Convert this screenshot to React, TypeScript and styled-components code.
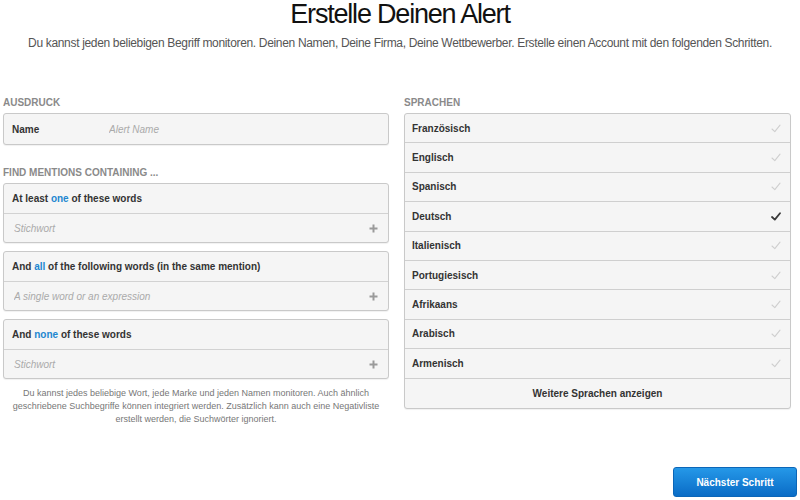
import React from 'react';
import styled, {createGlobalStyle} from "styled-components";

const GlobalStyle = createGlobalStyle`
  body {
    margin: 0;
    background: #fff;
    font-family: "Liberation Sans", Arial, sans-serif;
    color: #333;
  }
`

const languages = [
    {name: "Französisch", active: false},
    {name: "Englisch", active: false},
    {name: "Spanisch", active: false},
    {name: "Deutsch", active: true},
    {name: "Italienisch", active: false},
    {name: "Portugiesisch", active: false},
    {name: "Afrikaans", active: false},
    {name: "Arabisch", active: false},
    {name: "Armenisch", active: false},
]

const mentions = [
    {before: "At least ", word: "one", after: " of these words", placeholder: "Stichwort"},
    {before: "And ", word: "all", after: " of the following words (in the same mention)", placeholder: "A single word or an expression"},
    {before: "And ", word: "none", after: " of these words", placeholder: "Stichwort"},
]

const Check = ({active}: { active: boolean }) => (
    <svg width="10" height="9" viewBox="0 0 10 9">
        <path d="M1 5 L3.8 7.6 L9 1.2" fill="none" stroke={active ? "#3a3a3a" : "#cfcfcf"}
              strokeWidth={active ? 1.8 : 1.1} strokeLinecap="round" strokeLinejoin="round"/>
    </svg>
)

const Plus = () => (
    <svg width="9" height="9" viewBox="0 0 9 9">
        <path d="M4.5 0.5 V8.5 M0.5 4.5 H8.5" stroke="#9a9a9a" strokeWidth="2"/>
    </svg>
)

export default function App() {
    return (
        <Page>
            <GlobalStyle/>
            <Title>Erstelle Deinen Alert</Title>
            <Subtitle>Du kannst jeden beliebigen Begriff monitoren. Deinen Namen, Deine Firma, Deine Wettbewerber. Erstelle einen Account mit den folgenden Schritten.</Subtitle>
            <Columns>
                <Column>
                    <SectionLabel>Ausdruck</SectionLabel>
                    <Box>
                        <NameRow>
                            <FieldName>Name</FieldName>
                            <Input placeholder="Alert Name"/>
                        </NameRow>
                    </Box>
                    <SectionLabel spaced>Find mentions containing ...</SectionLabel>
                    <BoxStack>
                        {mentions.map((m, i) => (
                            <Box key={i}>
                                <BoxHeader>
                                    {m.before}<Highlight>{m.word}</Highlight>{m.after}
                                </BoxHeader>
                                <InputRow>
                                    <Input placeholder={m.placeholder}/>
                                    <Plus/>
                                </InputRow>
                            </Box>
                        ))}
                    </BoxStack>
                    <HelpText>
                        Du kannst jedes beliebige Wort, jede Marke und jeden Namen monitoren. Auch ähnlich<br/>
                        geschriebene Suchbegriffe können integriert werden. Zusätzlich kann auch eine Negativliste<br/>
                        erstellt werden, die Suchwörter ignoriert.
                    </HelpText>
                </Column>
                <Column>
                    <SectionLabel>Sprachen</SectionLabel>
                    <Box>
                        {languages.map(l => (
                            <LanguageRow key={l.name}>
                                <span>{l.name}</span>
                                <Check active={l.active}/>
                            </LanguageRow>
                        ))}
                        <MoreRow>Weitere Sprachen anzeigen</MoreRow>
                    </Box>
                </Column>
            </Columns>
            <Footer>
                <NextButton>Nächster Schritt</NextButton>
            </Footer>
        </Page>
    );
}

const Page = styled.div`
  width: 800px;
  height: 500px;
  overflow: hidden;
`
const Title = styled.h1`
  margin: 0;
  text-align: center;
  font-size: 27px;
  font-weight: 400;
  line-height: 28px;
  letter-spacing: -1.2px;
  color: #111;
`
const Subtitle = styled.p`
  margin: 7px 0 0;
  text-align: center;
  font-size: 12px;
  line-height: 16px;
  color: #555;
  letter-spacing: -0.33px;
  white-space: nowrap;
`
const Columns = styled.div`
  display: grid;
  grid-template-columns: 386px 387px;
  column-gap: 15px;
  padding-left: 3px;
  margin-top: 46px;
  align-items: start;
`
const Column = styled.div`
  display: flex;
  flex-direction: column;
`
const SectionLabel = styled.div<{ spaced?: boolean }>`
  font-size: 10px;
  font-weight: 700;
  line-height: 12px;
  color: #8a8a8a;
  text-transform: uppercase;
  margin-top: ${props => props.spaced ? "22px" : "0"};
  margin-bottom: 4px;
`
const BoxStack = styled.div`
  display: flex;
  flex-direction: column;
  gap: 8px;
`
const Box = styled.div`
  background: #f5f5f5;
  border: 1px solid #c9c9c9;
  border-radius: 3px;
  box-shadow: 0 1px 1px rgba(0, 0, 0, 0.06);
  overflow: hidden;
`
const NameRow = styled.div`
  display: flex;
  align-items: center;
  height: 30px;
  padding-left: 8px;
`
const FieldName = styled.span`
  width: 97px;
  font-size: 10px;
  font-weight: 700;
  color: #333;
`
const Input = styled.input`
  flex: 1;
  border: none;
  background: transparent;
  outline: none;
  padding: 0;
  font-family: "Liberation Sans", Arial, sans-serif;
  font-size: 10px;
  color: #333;
  &::placeholder {
    color: #aaa;
    font-style: italic;
  }
`
const BoxHeader = styled.div`
  height: 29px;
  display: flex;
  align-items: center;
  padding-left: 8px;
  font-size: 10px;
  font-weight: 700;
  color: #333;
  white-space: pre;
  border-bottom: 1px solid #d2d2d2;
`
const Highlight = styled.span`
  color: #2287d0;
`
const InputRow = styled.div`
  height: 28px;
  display: flex;
  align-items: center;
  padding: 0 10px;
`
const HelpText = styled.p`
  margin: 8px 0 0;
  text-align: center;
  font-size: 9px;
  line-height: 13px;
  color: #777;
  white-space: nowrap;
`
const LanguageRow = styled.div`
  height: 28.4px;
  display: flex;
  align-items: center;
  justify-content: space-between;
  padding: 0 9px 0 7px;
  font-size: 10px;
  font-weight: 700;
  color: #333;
  border-bottom: 1px solid #cfcfcf;
`
const MoreRow = styled.div`
  height: 29px;
  display: flex;
  align-items: center;
  justify-content: center;
  font-size: 10px;
  font-weight: 700;
  color: #333;
`
const Footer = styled.div`
  display: flex;
  justify-content: flex-end;
  padding-right: 3px;
  margin-top: 41px;
`
const NextButton = styled.button`
  width: 124px;
  height: 30px;
  border: 1px solid #0b66b8;
  border-radius: 3px;
  background: linear-gradient(#2598e8, #0a6cc6);
  color: #fff;
  font-family: "Liberation Sans", Arial, sans-serif;
  font-size: 10px;
  font-weight: 700;
  cursor: pointer;
`
